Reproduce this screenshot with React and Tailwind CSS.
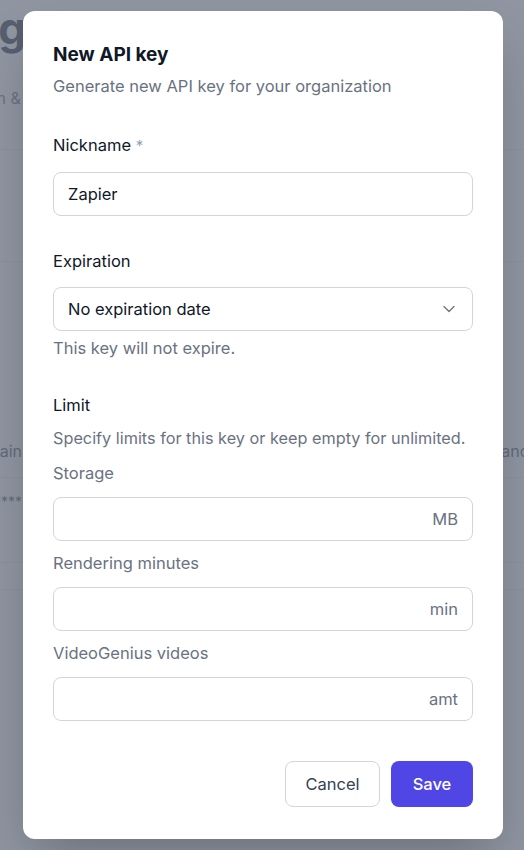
import React from "react";
import { ChevronDown } from "lucide-react";

function Field({ label, suffix }) {
  return (
    <div className="flex flex-col">
      <label className="text-[16.5px] leading-6 text-gray-500">{label}</label>
      <div className="mt-3 flex h-11 items-center justify-end rounded-lg border border-gray-300 bg-white px-[14px]">
        <span className="text-[16.5px] text-gray-500">{suffix}</span>
      </div>
    </div>
  );
}

export default function App() {
  return (
    <div className="relative h-[850px] w-full overflow-hidden bg-gray-50 font-['Inter',sans-serif]">
      {/* background page */}
      <div className="flex flex-col">
        <div className="flex h-[150px] flex-col border-b border-gray-200 bg-white">
          <div className="mt-[2px] flex w-[26px] justify-end whitespace-nowrap text-[44px] font-bold leading-[52px] text-gray-800">
            Branding
          </div>
          <div className="mt-[32px] flex whitespace-nowrap text-base text-gray-500">
            <div className="flex w-[6px] justify-end">Organization</div>
            <span>&nbsp;&amp; members</span>
          </div>
        </div>
        <div className="h-[112px] border-b border-gray-200 bg-white" />
        <div className="flex h-[216px] items-end justify-between border-b border-gray-200 bg-white pb-[14px] text-base text-gray-600">
          <div className="flex w-[22px] justify-end whitespace-nowrap">Domain</div>
          <div className="w-[46px] whitespace-nowrap">Balance</div>
        </div>
        <div className="flex h-[85px] items-start border-b border-gray-200 bg-white pt-[14px] text-sm text-gray-600">
          <div className="flex w-[22px] justify-end whitespace-nowrap">sk_live_************</div>
        </div>
        <div className="h-[27px] border-b border-gray-200 bg-white" />
      </div>

      {/* overlay */}
      <div className="absolute inset-0 bg-gray-500/75" />

      {/* modal */}
      <div className="absolute inset-0 flex items-start justify-center pl-[2px] pt-[11px]">
        <div className="flex w-[480px] flex-col rounded-xl bg-white px-[30px] pb-[32px] pt-[30px] shadow-2xl">
          <h2 className="text-[19px] font-bold leading-7 text-gray-900">New API key</h2>
          <p className="mt-[5px] text-[16.5px] leading-6 text-gray-500">
            Generate new API key for your organization
          </p>

          <div className="mt-[35px] flex flex-col">
            <label className="text-[16.5px] leading-6 text-gray-900">
              Nickname <span className="text-[15px] text-gray-400">*</span>
            </label>
            <div className="mt-[14px] flex h-11 items-center rounded-lg border border-gray-300 bg-white px-[14px]">
              <span className="text-[16.5px] text-gray-900">Zapier</span>
            </div>
          </div>

          <div className="mt-[33px] flex flex-col">
            <label className="text-[16.5px] leading-6 text-gray-900">Expiration</label>
            <div className="mt-[14px] flex h-11 items-center justify-between rounded-lg border border-gray-300 bg-white pl-[14px] pr-[13px]">
              <span className="text-[16.5px] text-gray-900">No expiration date</span>
              <ChevronDown className="h-5 w-5 text-gray-500" strokeWidth={1.5} />
            </div>
            <p className="mt-[5px] text-[16.5px] leading-6 text-gray-500">This key will not expire.</p>
          </div>

          <div className="mt-[33px] flex flex-col">
            <h3 className="text-[16.5px] leading-6 text-gray-900">Limit</h3>
            <p className="mt-[9px] text-[16.25px] leading-6 text-gray-500">
              Specify limits for this key or keep empty for unlimited.
            </p>
            <div className="mt-[11px] flex flex-col gap-[10px]">
              <Field label="Storage" suffix="MB" />
              <Field label="Rendering minutes" suffix="min" />
              <Field label="VideoGenius videos" suffix="amt" />
            </div>
          </div>

          <div className="mt-10 flex justify-end gap-[11px]">
            <button className="h-[46px] w-[95px] rounded-lg border border-gray-300 bg-white text-[16.5px] text-gray-700">
              Cancel
            </button>
            <button className="h-[46px] w-[82px] rounded-lg bg-[#4f46e5] text-[16.5px] font-medium text-white">
              Save
            </button>
          </div>
        </div>
      </div>
    </div>
  );
}
